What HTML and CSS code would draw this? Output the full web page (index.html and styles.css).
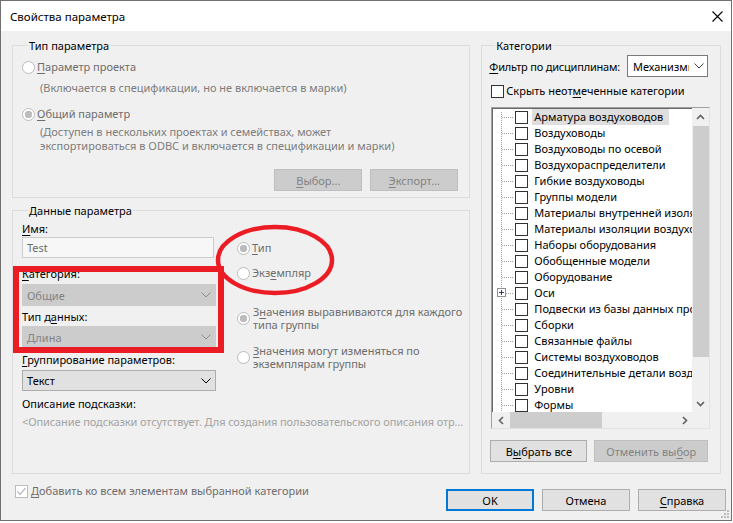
FILE: index.html
```html
<!DOCTYPE html>
<html lang="ru">
<head>
    <meta charset="UTF-8">
    <meta name="viewport" content="width=device-width, initial-scale=1.0">
    <title>Свойства параметра</title>
    <link rel="stylesheet" href="styles.css">
</head>
<body>

<div class="okno">
    <div class="titlu">
        <span class="titlu-text">Свойства параметра</span>
        <svg class="inchide" width="11" height="11" viewBox="0 0 11 11">
            <path d="M0.5 0.5 L10.5 10.5 M10.5 0.5 L0.5 10.5" stroke="#000" stroke-width="1.1" fill="none"/>
        </svg>
    </div>

    <div class="continut">
        <div class="coloane">
            <div class="stanga">
                <div class="grup grup-tip">
                    <div class="legenda">Тип параметра</div>
                    <div class="radio r-proiect dezactivat"><span class="cerc"></span><span><u>П</u>араметр проекта</span></div>
                    <div class="nota n-proiect">(Включается в спецификации, но не включается в марки)</div>
                    <div class="radio r-comun dezactivat"><span class="cerc bifat"></span><span><u>О</u>бщий параметр</span></div>
                    <div class="nota n-comun">(Доступен в нескольких проектах и семействах, может<br>экспортироваться в ODBC и включается в спецификации и марки)</div>
                    <div class="rand-butoane">
                        <button class="buton dezactivat b-alege"><u>В</u>ыбор...</button>
                        <button class="buton dezactivat b-export"><u>Э</u>кспорт...</button>
                    </div>
                </div>

                <div class="grup grup-date">
                    <div class="legenda">Данные параметра</div>
                    <div class="date-coloane">
                        <div class="date-stanga">
                            <div class="eticheta e-nume"><u>И</u>мя:</div>
                            <div class="camp">Test</div>
                            <div class="eticheta e-categ"><u>К</u>атегория:</div>
                            <div class="lista dezactivat"><span>Общие</span>
                                <svg width="10" height="6" viewBox="0 0 10 6"><polyline points="0.5,0.5 5,5 9.5,0.5" fill="none" stroke="#8c8c8c"/></svg>
                            </div>
                            <div class="eticheta e-tip">Тип д<u>а</u>нных:</div>
                            <div class="lista dezactivat l-tip"><span>Длина</span>
                                <svg width="10" height="6" viewBox="0 0 10 6"><polyline points="0.5,0.5 5,5 9.5,0.5" fill="none" stroke="#8c8c8c"/></svg>
                            </div>
                            <div class="eticheta e-grup"><u>Г</u>руппирование параметров:</div>
                            <div class="lista l-grup"><span>Текст</span>
                                <svg width="10" height="6" viewBox="0 0 10 6"><polyline points="0.5,0.5 5,5 9.5,0.5" fill="none" stroke="#000"/></svg>
                            </div>
                        </div>
                        <div class="date-dreapta">
                            <div class="radio dezactivat r-tip"><span class="cerc bifat"></span><span><u>Т</u>ип</span></div>
                            <div class="radio dezactivat r-exemplar"><span class="cerc"></span><span>Экз<u>е</u>мпляр</span></div>
                            <div class="radio dezactivat dublu r-val1"><span class="cerc bifat"></span><span>З<u>н</u>ачения выравниваются для каждого<br>типа группы</span></div>
                            <div class="radio dezactivat dublu r-val2"><span class="cerc"></span><span><u>З</u>начения могут изменяться по<br>экземплярам группы</span></div>
                        </div>
                    </div>
                    <div class="eticheta e-descriere">Описание подсказки:</div>
                    <div class="descriere">&lt;Описание подсказки отсутствует. Для создания пользовательского описания отр...</div>
                </div>
            </div>

            <div class="grup grup-categorii">
                <div class="legenda">Категории</div>
                <div class="rand-filtru">
                    <span class="filtru-text"><u>Ф</u>ильтр по дисциплинам:</span>
                    <div class="lista l-filtru"><span>Механизмы</span>
                        <svg width="10" height="6" viewBox="0 0 10 6"><polyline points="0.5,0.5 5,5 9.5,0.5" fill="none" stroke="#444"/></svg>
                    </div>
                </div>
                <div class="rand-ascunde"><span class="bifa"></span><span>Скрыть неот<u>м</u>еченные категории</span></div>

                <div class="arbore">
                    <div class="arbore-elemente">
                        <div class="element"><span class="linie"></span><span class="bifa"></span><span class="nume selectat">Арматура воздуховодов</span></div>
                        <div class="element"><span class="linie"></span><span class="bifa"></span><span class="nume">Воздуховоды</span></div>
                        <div class="element"><span class="linie"></span><span class="bifa"></span><span class="nume">Воздуховоды по осевой</span></div>
                        <div class="element"><span class="linie"></span><span class="bifa"></span><span class="nume">Воздухораспределители</span></div>
                        <div class="element"><span class="linie"></span><span class="bifa"></span><span class="nume">Гибкие воздуховоды</span></div>
                        <div class="element"><span class="linie"></span><span class="bifa"></span><span class="nume">Группы модели</span></div>
                        <div class="element"><span class="linie"></span><span class="bifa"></span><span class="nume">Материалы внутренней изоляции</span></div>
                        <div class="element"><span class="linie"></span><span class="bifa"></span><span class="nume">Материалы изоляции воздуховодов</span></div>
                        <div class="element"><span class="linie"></span><span class="bifa"></span><span class="nume">Наборы оборудования</span></div>
                        <div class="element"><span class="linie"></span><span class="bifa"></span><span class="nume">Обобщенные модели</span></div>
                        <div class="element"><span class="linie"></span><span class="bifa"></span><span class="nume">Оборудование</span></div>
                        <div class="element"><span class="plus"></span><span class="linie"></span><span class="bifa"></span><span class="nume">Оси</span></div>
                        <div class="element"><span class="linie"></span><span class="bifa"></span><span class="nume">Подвески из базы данных производителя</span></div>
                        <div class="element"><span class="linie"></span><span class="bifa"></span><span class="nume">Сборки</span></div>
                        <div class="element"><span class="linie"></span><span class="bifa"></span><span class="nume">Связанные файлы</span></div>
                        <div class="element"><span class="linie"></span><span class="bifa"></span><span class="nume">Системы воздуховодов</span></div>
                        <div class="element"><span class="linie"></span><span class="bifa"></span><span class="nume">Соединительные детали воздуховодов</span></div>
                        <div class="element"><span class="linie"></span><span class="bifa"></span><span class="nume">Уровни</span></div>
                        <div class="element"><span class="linie"></span><span class="bifa"></span><span class="nume">Формы</span></div>
                    </div>
                    <div class="derulare-v">
                        <svg class="sageata" width="9" height="6" viewBox="0 0 9 6"><polyline points="1,5 4.5,1.5 8,5" fill="none" stroke="#606060" stroke-width="1.6"/></svg>
                        <div class="cursor-v"></div>
                        <svg class="sageata jos" width="9" height="6" viewBox="0 0 9 6"><polyline points="1,1 4.5,4.5 8,1" fill="none" stroke="#606060" stroke-width="1.6"/></svg>
                    </div>
                    <div class="derulare-o">
                        <svg class="sageata" width="6" height="9" viewBox="0 0 6 9"><polyline points="5,1 1.5,4.5 5,8" fill="none" stroke="#606060" stroke-width="1.6"/></svg>
                        <div class="cursor-o"></div>
                        <svg class="sageata dreapta" width="6" height="9" viewBox="0 0 6 9"><polyline points="1,1 4.5,4.5 1,8" fill="none" stroke="#606060" stroke-width="1.6"/></svg>
                    </div>
                    <div class="colt"></div>
                </div>

                <div class="rand-butoane-cat">
                    <button class="buton b-toate">В<u>ы</u>брать все</button>
                    <button class="buton dezactivat b-anulare">Отменить вы<u>б</u>ор</button>
                </div>
            </div>
        </div>

        <div class="subsol">
            <div class="adauga dezactivat">
                <span class="bifa gri">
                    <svg width="11" height="11" viewBox="0 0 11 11"><polyline points="1.5,5.5 4,8.5 9.5,2" fill="none" stroke="#bcbcbc" stroke-width="1.3"/></svg>
                </span>
                <span><u>Д</u>обавить ко всем элементам выбранной категории</span>
            </div>
            <div class="butoane-final">
                <button class="buton implicit">OK</button>
                <button class="buton">Отмена</button>
                <button class="buton"><u>С</u>правка</button>
            </div>
        </div>
    </div>

    <!-- marcaje rosii peste dialog -->
    <div class="marcaj-dreptunghi"></div>
    <svg class="marcaj-elipsa" width="124" height="74" viewBox="0 0 124 74">
        <ellipse cx="61" cy="36" rx="57" ry="33" fill="none" stroke="#ec1c24" stroke-width="4.5"/>
    </svg>

    <svg class="maner" width="9" height="9" viewBox="0 0 9 9">
        <rect x="6" y="0" width="2" height="2" fill="#bcbcbc"/>
        <rect x="3" y="3" width="2" height="2" fill="#bcbcbc"/>
        <rect x="6" y="3" width="2" height="2" fill="#bcbcbc"/>
        <rect x="0" y="6" width="2" height="2" fill="#bcbcbc"/>
        <rect x="3" y="6" width="2" height="2" fill="#bcbcbc"/>
        <rect x="6" y="6" width="2" height="2" fill="#bcbcbc"/>
    </svg>
</div>

</body>
</html>
```

FILE: styles.css
```css
body {
    margin: 0;
    background-color: #ffffff;
    font-family: "Noto Sans", sans-serif;
    font-size: 11px;
    color: #000;
}
u {
    text-underline-offset: 2px;
}

.okno {
    position: relative;
    width: 732px;
    height: 521px;
    box-sizing: border-box;
    border: 1px solid #707070;
    background-color: #f0f0f0;
    overflow: hidden;
}

.titlu {
    display: flex;
    align-items: center;
    height: 30px;
    padding-left: 9px;
    background-color: #ffffff;
}
.titlu-text {
    font-size: 11.5px;
    line-height: 16px;
    margin-top: 1px;
}
.inchide {
    margin-left: auto;
    margin-right: 8px;
}

.continut {
    padding: 14px 10px 0 11px;
}
.coloane {
    display: flex;
    gap: 11px;
    height: 429px;
}
.stanga {
    width: 459px;
    display: flex;
    flex-direction: column;
}

.grup {
    border: 1px solid #dcdcdc;
    box-sizing: border-box;
}
.legenda {
    width: fit-content;
    margin: -7px 0 0 6px;
    padding: 0 1px;
    line-height: 14px;
    background-color: #f0f0f0;
}

/* tip parametru */
.grup-tip {
    padding: 0 0 6px 9px;
}
.radio {
    display: flex;
    align-items: center;
    line-height: 16px;
}
.cerc {
    width: 13px;
    height: 13px;
    box-sizing: border-box;
    border: 1px solid #bcbcbc;
    border-radius: 50%;
    background-color: #ffffff;
    margin-right: 2px;
    flex-shrink: 0;
}
.cerc.bifat {
    background: radial-gradient(circle, #bcbcbc 0 3.5px, #ffffff 4px);
}
.dezactivat {
    color: #6d6d6d;
}
.r-proiect {
    margin-top: 6px;
}
.nota {
    color: #7d7d7d;
    padding-left: 18px;
    line-height: 16px;
    white-space: nowrap;
}
.n-proiect {
    margin-top: 5px;
}
.r-comun {
    margin-top: 10px;
}
.n-comun {
    margin-top: 3px;
    line-height: 14px;
}
.rand-butoane {
    display: flex;
    justify-content: flex-end;
    gap: 8px;
    margin-top: 16px;
    padding-right: 11px;
}

.buton {
    height: 22px;
    width: 88px;
    box-sizing: border-box;
    border: 1px solid #adadad;
    background-color: #e1e1e1;
    font-family: inherit;
    font-size: 11px;
    color: #000;
    padding: 0;
}
.buton.dezactivat {
    background-color: #cccccc;
    border-color: #bfbfbf;
    color: #838383;
}
.buton.implicit {
    border: 2px solid #0078d7;
}

/* date parametru */
.grup-date {
    margin-top: 12px;
    flex: 1;
    padding: 0 0 0 9px;
}
.date-coloane {
    display: grid;
    grid-template-columns: 194px 1fr;
    column-gap: 21px;
}
.eticheta {
    line-height: 16px;
}
.e-nume {
    margin-top: 3px;
}
.camp {
    height: 21px;
    width: 192px;
    box-sizing: border-box;
    border: 1px solid #cccccc;
    background-color: #f7f7f7;
    color: #6d6d6d;
    padding-left: 4px;
    line-height: 19px;
}
.e-categ {
    margin-top: 8px;
}
.lista {
    display: flex;
    align-items: center;
    justify-content: space-between;
    height: 22px;
    box-sizing: border-box;
    border: 1px solid #adadad;
    background-color: #e1e1e1;
    padding: 0 4px 0 4px;
    margin-top: 2px;
}
.lista.dezactivat {
    border-color: #cccccc;
    background-color: #cccccc;
    color: #838383;
}
.e-tip {
    margin-top: 3px;
}
.l-tip {
    margin-top: 1px;
}
.e-grup {
    margin-top: 4px;
}
.l-grup {
    height: 21px;
}
.date-dreapta .radio.dezactivat {
    color: #6d6d6d;
}
.r-tip {
    margin-top: 22px;
}
.r-exemplar {
    margin-top: 9px;
}
.radio.dublu {
    line-height: 13px;
    white-space: nowrap;
}
.radio.dublu .cerc {
    margin-right: 3px;
}
.r-val1 {
    margin-top: 24px;
}
.r-val2 {
    margin-top: 13px;
}
.e-descriere {
    margin-top: 5px;
}
.descriere {
    margin-top: 2px;
    line-height: 16px;
    color: #a3a3a3;
    white-space: nowrap;
    letter-spacing: -0.1px;
}

/* categorii */
.grup-categorii {
    width: 240px;
    padding: 0 0 0 7px;
}
.rand-filtru {
    display: flex;
    align-items: center;
    justify-content: space-between;
    margin-top: 2px;
    padding-right: 12px;
    white-space: nowrap;
}
.filtru-text {
    letter-spacing: -0.2px;
}
.l-filtru {
    width: 81px;
    flex-shrink: 0;
    margin-top: 0;
    background-color: #ffffff;
    border-color: #7a7a7a;
    padding: 0 3px 0 5px;
    overflow: hidden;
}
.l-filtru span {
    white-space: nowrap;
    overflow: hidden;
    width: 56px;
}
.rand-ascunde {
    display: flex;
    align-items: center;
    line-height: 16px;
    margin-top: 6px;
    margin-left: 2px;
}
.bifa {
    width: 13px;
    height: 13px;
    box-sizing: border-box;
    border: 1px solid #333333;
    background-color: #ffffff;
    flex-shrink: 0;
    margin-right: 2px;
}

.arbore {
    display: grid;
    grid-template-columns: 200px 17px;
    grid-template-rows: 304px 16px;
    width: 219px;
    height: 322px;
    box-sizing: border-box;
    margin: 8px 0 0 2px;
    border: 1px solid;
    border-color: #a0a0a0 #e3e3e3 #e3e3e3 #a0a0a0;
    box-shadow: inset 1px 1px #696969;
    background-color: #ffffff;
}
.arbore-elemente {
    overflow: hidden;
    padding-top: 1px;
    background-image: repeating-linear-gradient(to bottom, #a0a0a0 0 1px, transparent 1px 2px);
    background-size: 1px 100%;
    background-position: 9px 4px;
    background-repeat: no-repeat;
}
.element {
    position: relative;
    display: flex;
    align-items: center;
    height: 16px;
    white-space: nowrap;
}
.linie {
    width: 11px;
    height: 1px;
    margin-left: 10px;
    margin-right: 2px;
    flex-shrink: 0;
    background-image: repeating-linear-gradient(to right, #a0a0a0 0 1px, transparent 1px 2px);
}
.element .bifa {
    margin-right: 4px;
}
.nume {
    padding: 0 2px;
    line-height: 16px;
}
.nume.selectat {
    background-color: #dedede;
    padding-right: 6px;
}
.plus {
    position: absolute;
    left: 5px;
    top: 3px;
    width: 9px;
    height: 9px;
    box-sizing: border-box;
    border: 1px solid #919191;
    background:
        linear-gradient(#2b3a78, #2b3a78) center / 5px 1px no-repeat,
        linear-gradient(#2b3a78, #2b3a78) center / 1px 5px no-repeat,
        #ffffff;
}

.derulare-v {
    display: flex;
    flex-direction: column;
    align-items: center;
    background-color: #f0f0f0;
}
.derulare-v .sageata {
    margin-top: 6px;
}
.derulare-v .sageata.jos {
    margin-top: auto;
    margin-bottom: 5px;
}
.cursor-v {
    width: 16px;
    height: 231px;
    margin-top: 6px;
    background-color: #cdcdcd;
}
.derulare-o {
    display: flex;
    align-items: center;
    background-color: #f0f0f0;
}
.derulare-o .sageata {
    margin-left: 6px;
}
.derulare-o .sageata.dreapta {
    margin-left: auto;
    margin-right: 4px;
}
.cursor-o {
    width: 92px;
    height: 16px;
    margin-left: 6px;
    background-color: #cdcdcd;
}
.colt {
    background-color: #f0f0f0;
}

.rand-butoane-cat {
    display: flex;
    gap: 7px;
    margin: 11px 0 0 1px;
}
.b-toate {
    width: 97px;
}
.b-anulare {
    width: 114px;
}

/* subsol */
.subsol {
    display: flex;
    align-items: flex-start;
    justify-content: space-between;
    padding-top: 9px;
    margin-right: -5px;
}
.adauga {
    display: flex;
    align-items: center;
    line-height: 16px;
    margin-left: 3px;
}
.adauga .bifa {
    border-color: #bcbcbc;
    margin-right: 3px;
    display: flex;
    align-items: center;
    justify-content: center;
}
.butoane-final {
    display: flex;
    gap: 8px;
    margin-top: 6px;
}

/* marcaje */
.marcaj-dreptunghi {
    position: absolute;
    left: 12px;
    top: 265px;
    width: 211px;
    height: 87px;
    box-sizing: border-box;
    border: 6px solid #ec1c24;
}
.marcaj-elipsa {
    position: absolute;
    left: 213px;
    top: 223px;
}
.maner {
    position: absolute;
    right: 1px;
    bottom: 1px;
}
```
